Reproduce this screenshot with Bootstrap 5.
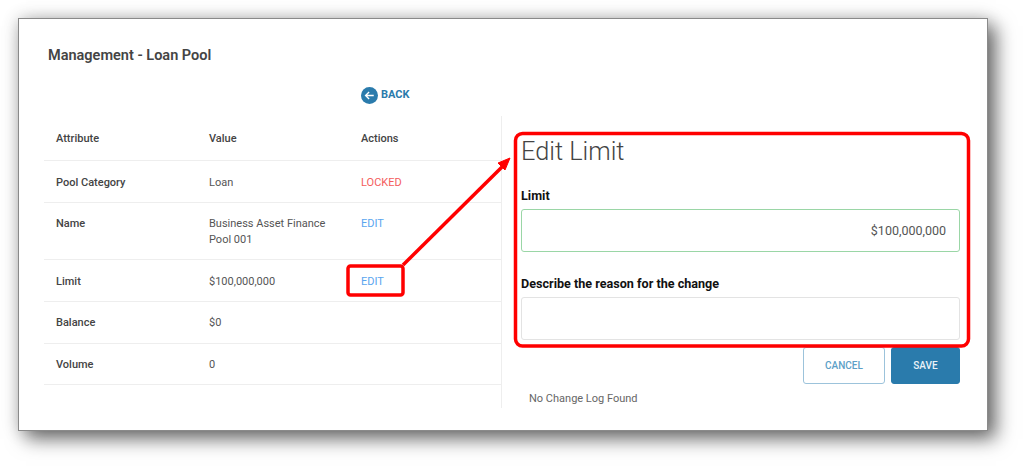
<!DOCTYPE html>
<html lang="en">
<head>
  <meta charset="UTF-8">
  <meta name="viewport" content="width=device-width, initial-scale=1">
  <title>Management - Loan Pool</title>
  <link href="https://cdn.jsdelivr.net/npm/bootstrap@5.3.3/dist/css/bootstrap.min.css" rel="stylesheet">
  <style>
    html, body { background: #fff; overflow: hidden; }
    body { font-family: Roboto, "Liberation Sans", sans-serif; height: 467px; padding: 18px 36px 0 18px; position: relative; }

    .pool-panel {
      height: 413px;
      padding: 27px 27px 0 25px;
      border: 1px solid #8a8a8a;
      background: #fff;
      box-shadow: 0 0 16px rgba(0,0,0,.18), 8px 8px 18px rgba(0,0,0,.55);
    }
    .pool-title { font-size: 14.5px; font-weight: 600; color: #444; margin: 0 0 0 4px; line-height: 20px; }

    .back-row { margin: 19px 0 0 317px; height: 20px; color: #2a7bac; font-size: 11px; font-weight: 700; gap: 3px; }
    .back-icon { width: 17px; height: 17px; }

    .pool-split { margin-top: 11px; }
    .pool-left { width: 458px; height: 292px; border-right: 1px solid #eee; }
    .pool-right { width: 458px; padding-left: 19px; }

    .pool-table { font-size: 11px; line-height: 16px; color: #555; table-layout: fixed; margin: 0; }
    .pool-table td, .pool-table th { padding: 14px 12px 10px; height: 42px; vertical-align: top; border-color: #eee; font-weight: 400; color: #555; }
    .pool-table tr:first-child th { height: 44px; padding-top: 15px; }
    .pool-table tr:nth-child(3) td,
    .pool-table tr:nth-child(n+5) td { padding-top: 13px; padding-bottom: 11px; }
    .pool-table tr:last-child td { height: 41px; }
    .pool-table .attr-name, .pool-table th { font-weight: 500; color: #444; }
    .pool-table .col-a { width: 153px; }
    .pool-table .col-b { width: 152px; }
    .pool-table .act-locked { color: #f45c5c; }
    .pool-table .act-edit { color: #5aa5ef; text-decoration: none; }

    .edit-title { font-size: 25.3px; font-weight: 300; line-height: 32px; color: #444; margin: 20px 0 0; }
    .field-label { display: block; font-size: 12.6px; font-weight: 700; color: #111; line-height: 16px; margin: 0 0 5px; }
    .limit-label { margin-top: 20px; }
    .reason-label { margin-top: 24px; }
    .field-input { height: 43px; font-size: 12.5px; color: #555; border-color: #e3e3e3; border-radius: 3px; padding: 6px 13px; font-family: inherit; }
    .field-input.is-ok { border-color: #9ad6a6; text-align: right; }

    .form-btns { margin-top: 7px; gap: 6px; }
    .pool-btn { font-size: 10px; font-weight: 500; height: 37px; border-radius: 3px; padding: 0; }
    .pool-btn-cancel { width: 82px; background: #fff; color: #5c9fc7; border: 1px solid #9cc3db; }
    .pool-btn-save { width: 69px; background: #2a7bac; color: #e9f2f8; border: 1px solid #2a7bac; }
    .log-note { font-size: 11px; font-weight: 400; color: #666; line-height: 16px; margin: 7px 0 0 8px; }

    .callouts { position: absolute; left: 0; top: 0; pointer-events: none; }
  </style>
</head>
<body>
  <div class="pool-panel">
    <h1 class="pool-title">Management - Loan Pool</h1>

    <div class="back-row d-flex align-items-center">
      <svg class="back-icon" viewBox="0 0 18 18">
        <circle cx="9" cy="9" r="9" fill="#2a7bac"/>
        <path d="M13.5 9H5M8.6 5.2 4.8 9l3.8 3.8" fill="none" stroke="#fff" stroke-width="1.4"/>
      </svg>
      <span>BACK</span>
    </div>

    <div class="pool-split d-flex">
      <div class="pool-left">
        <table class="table pool-table">
          <colgroup><col class="col-a"><col class="col-b"><col></colgroup>
          <tr><th>Attribute</th><th>Value</th><th>Actions</th></tr>
          <tr><td class="attr-name">Pool Category</td><td>Loan</td><td><span class="act-locked">LOCKED</span></td></tr>
          <tr><td class="attr-name">Name</td><td>Business Asset Finance Pool 001</td><td><a class="act-edit" href="#">EDIT</a></td></tr>
          <tr><td class="attr-name">Limit</td><td>$100,000,000</td><td><a class="act-edit" href="#">EDIT</a></td></tr>
          <tr><td class="attr-name">Balance</td><td>$0</td><td></td></tr>
          <tr><td class="attr-name">Volume</td><td>0</td><td></td></tr>
        </table>
      </div>

      <div class="pool-right">
        <h2 class="edit-title">Edit Limit</h2>
        <label class="field-label limit-label" for="limitInput">Limit</label>
        <input id="limitInput" class="form-control field-input is-ok" type="text" value="$100,000,000">
        <label class="field-label reason-label" for="reasonInput">Describe the reason for the change</label>
        <input id="reasonInput" class="form-control field-input" type="text">
        <div class="form-btns d-flex justify-content-end">
          <button class="btn pool-btn pool-btn-cancel" type="button">CANCEL</button>
          <button class="btn pool-btn pool-btn-save" type="button">SAVE</button>
        </div>
        <p class="log-note">No Change Log Found</p>
      </div>
    </div>
  </div>

  <!-- red annotations on top of the screenshot -->
  <svg class="callouts" width="1024" height="467" viewBox="0 0 1024 467">
    <rect x="515.5" y="133.5" width="453" height="212.5" rx="7" fill="none" stroke="#f00" stroke-width="3.5"/>
    <rect x="348" y="266" width="55" height="29" rx="2.5" fill="none" stroke="#f00" stroke-width="3.5"/>
    <path d="M403 265 503 166" stroke="#f00" stroke-width="3.5" fill="none"/>
    <path d="M510 158 498 163 505 170Z" fill="#f00" stroke="#f00" stroke-width="1"/>
  </svg>
</body>
</html>
